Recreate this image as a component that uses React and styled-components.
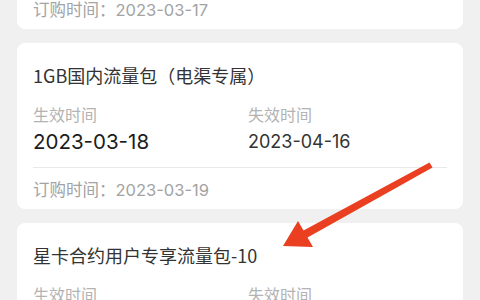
import React from 'react';
import styled, { createGlobalStyle } from 'styled-components';

const GlobalStyle = createGlobalStyle`
  html, body {
    margin: 0;
    padding: 0;
    background: #f0f0f0;
  }
  body {
    font-family: "Inter", "Noto Sans CJK SC", sans-serif;
  }
`;

// 画面（已向下滚动）
const Screen = styled.div`
  position: relative;
  width: 480px;
  height: 300px;
  overflow: hidden;
  background: #f0f0f0;
`;

const List = styled.div`
  display: flex;
  flex-direction: column;
  gap: 14px;
  padding: 0 17px;
  margin-top: ${(p) => p.$offset}px;
`;

const Card = styled.div`
  background: #fff;
  border-radius: 8px;
  padding: 20px 16px 8px 16px;
`;

const Title = styled.div`
  font-family: "Noto Sans CJK SC", sans-serif;
  font-size: 18px;
  line-height: 24px;
  color: #333;
`;

const Cols = styled.div`
  display: grid;
  grid-template-columns: 215px 1fr;
  margin-top: 16px;
`;

const Label = styled.div`
  font-family: "Noto Sans CJK SC", sans-serif;
  font-size: 16px;
  line-height: 22px;
  color: #b3b3b3;
`;

const DateText = styled.div`
  margin-top: 3px;
  font-size: ${(p) => (p.$big ? 20.5 : 18)}px;
  line-height: 28px;
  color: ${(p) => (p.$big ? '#1c1c1c' : '#333')};
`;

const Divider = styled.div`
  height: 1px;
  background: #e9e9e9;
  margin-top: 11px;
`;

const Order = styled.div`
  margin-top: 10px;
  font-size: 16.5px;
  line-height: 22px;
  color: #a3a3a3;
  span {
    font-family: "Noto Sans CJK SC", sans-serif;
  }
`;

// 标注箭头
const Arrow = styled.svg`
  position: absolute;
  left: 0;
  top: 0;
  pointer-events: none;
`;

const packs = [
  { id: 1, name: '1GB国内流量包（电渠专属）', start: '2023-03-17', end: '2023-04-15', order: '2023-03-17' },
  { id: 2, name: '1GB国内流量包（电渠专属）', start: '2023-03-18', end: '2023-04-16', order: '2023-03-19' },
  { id: 3, name: '星卡合约用户专享流量包-10', start: '2023-03-19', end: '2023-04-17', order: '2023-03-19' },
];

export default function App() {
  return (
    <Screen>
      <GlobalStyle />
      <List $offset={-137}>
        {packs.map((p) => (
          <Card key={p.id}>
            <Title>{p.name}</Title>
            <Cols>
              <div>
                <Label>生效时间</Label>
                <DateText $big>{p.start}</DateText>
              </div>
              <div>
                <Label>失效时间</Label>
                <DateText>{p.end}</DateText>
              </div>
            </Cols>
            <Divider />
            <Order>
              <span>订购时间：</span>
              {p.order}
            </Order>
          </Card>
        ))}
      </List>
      <Arrow width="480" height="300" viewBox="0 0 480 300">
        <polygon
          points="283,246 298,221 303.5,230.5 429.5,162.5 432.5,167.5 307.5,237.5 313,247"
          fill="#ea3f20"
        />
      </Arrow>
    </Screen>
  );
}
